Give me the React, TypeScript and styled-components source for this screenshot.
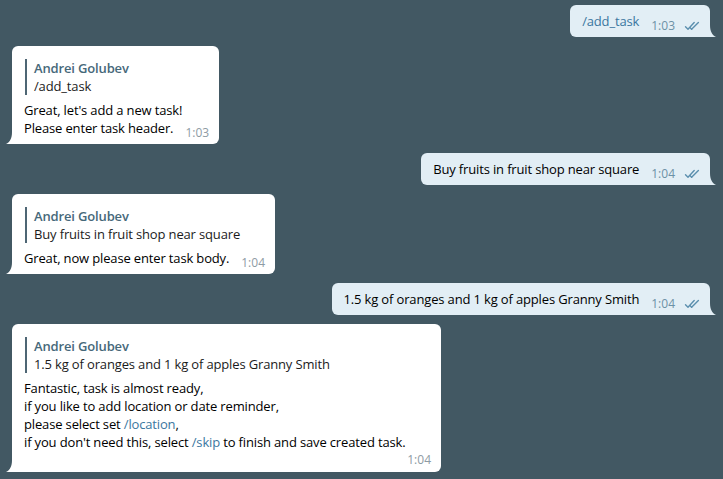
import styled, { createGlobalStyle } from 'styled-components';

const GlobalStyle = createGlobalStyle`
    html, body {
        margin: 0;
        padding: 0;
        background: #425863;
    }
    body {
        font-family: 'Open Sans', 'Noto Sans', sans-serif;
        font-size: 13px;
        line-height: 18px;
        letter-spacing: -0.15px;
        color: #000;
        -webkit-font-smoothing: antialiased;
    }
`;

const Chat = styled.div`
    display: flex;
    flex-direction: column;
    gap: 9px;
    padding: 5px 13px 7px 12px;
    width: 723px;
    height: 479px;
    box-sizing: border-box;
    overflow: hidden;
`;

const Row = styled.div<{ $out?: boolean }>`
    display: flex;
    justify-content: ${(p) => (p.$out ? 'flex-end' : 'flex-start')};
`;

const Bubble = styled.div<{ $out?: boolean; $width?: number }>`
    position: relative;
    display: flex;
    flex-direction: column;
    box-sizing: border-box;
    width: ${(p) => (p.$width ? `${p.$width}px` : 'auto')};
    padding: 7px 10px 7px 12px;
    background: ${(p) => (p.$out ? '#e2eef5' : '#ffffff')};
    border-radius: ${(p) => (p.$out ? '6px 6px 0 6px' : '6px 6px 6px 0')};
`;

const TailSvg = styled.svg<{ $out?: boolean }>`
    position: absolute;
    bottom: 0;
    ${(p) => (p.$out ? 'right: -6px;' : 'left: -6px; transform: scaleX(-1);')}
    width: 6px;
    height: 12px;
    fill: ${(p) => (p.$out ? '#e2eef5' : '#ffffff')};
`;

const Reply = styled.div`
    display: flex;
    flex-direction: column;
    margin: 6px 0 6px 1px;
    padding-left: 7px;
    border-left: 2px solid #4e6674;
`;

const ReplyName = styled.span`
    font-weight: 600;
    color: #46687a;
    white-space: nowrap;
`;

const ReplyText = styled.span`
    color: #1b1b1b;
    white-space: nowrap;
`;

const Line = styled.div`
    white-space: nowrap;
`;

const LastLine = styled.div`
    display: flex;
    align-items: flex-end;
    white-space: nowrap;
`;

const MetaRow = styled.div`
    display: flex;
    justify-content: flex-end;
    height: 14px;
`;

const Meta = styled.span<{ $out?: boolean }>`
    display: flex;
    align-items: center;
    gap: 9px;
    margin-left: auto;
    margin-bottom: -3px;
    padding-left: 12px;
    font-size: 12px;
    line-height: 14px;
    letter-spacing: 0;
    color: ${(p) => (p.$out ? '#6c91a6' : '#8e9ba4')};
`;

const Command = styled.span`
    color: #3b77a0;
`;

function Tail({ out }: { out?: boolean }) {
    return (
        <TailSvg $out={out} viewBox="0 0 6 12" aria-hidden>
            <path d="M0 0 C0 6 2 10 6 12 L0 12 Z" />
        </TailSvg>
    );
}

function Checks() {
    return (
        <svg width="16" height="10" viewBox="0 0 16 10" fill="none" stroke="#5b8fae" strokeWidth="1.4" strokeLinecap="round" strokeLinejoin="round">
            <path d="M1.5 5.8 L4 8.3 L10.2 1.6" />
            <path d="M7.6 8.2 L14.4 1.6" />
            <path d="M6.2 6.8 L7.6 8.2" />
        </svg>
    );
}

function Outgoing({ children, time }: { children: React.ReactNode; time: string }) {
    return (
        <Row $out>
            <Bubble $out>
                <LastLine>
                    <span>{children}</span>
                    <Meta $out>
                        {time}
                        <Checks />
                    </Meta>
                </LastLine>
                <Tail out />
            </Bubble>
        </Row>
    );
}

interface IncomingProps {
    quote: string;
    lines: React.ReactNode[];
    time: string;
    timeBelow?: boolean;
    width?: number;
}

function Incoming(props: IncomingProps) {
    const head = props.lines.slice(0, -1);
    const last = props.lines[props.lines.length - 1];
    return (
        <Row>
            <Bubble $width={props.width}>
                <Reply>
                    <ReplyName>Andrei Golubev</ReplyName>
                    <ReplyText>{props.quote}</ReplyText>
                </Reply>
                {head.map((l, i) => (
                    <Line key={i}>{l}</Line>
                ))}
                {props.timeBelow ? (
                    <>
                        <Line>{last}</Line>
                        <MetaRow>
                            <Meta>{props.time}</Meta>
                        </MetaRow>
                    </>
                ) : (
                    <LastLine>
                        <span>{last}</span>
                        <Meta>{props.time}</Meta>
                    </LastLine>
                )}
                <Tail />
            </Bubble>
        </Row>
    );
}

export default function App() {
    return (
        <>
            <GlobalStyle />
            <Chat>
                <Outgoing time="1:03">
                    <Command>/add_task</Command>
                </Outgoing>
                <Incoming
                    quote="/add_task"
                    lines={["Great, let's add a new task!", 'Please enter task header.']}
                    time="1:03"
                />
                <Outgoing time="1:04">Buy fruits in fruit shop near square</Outgoing>
                <Incoming
                    quote="Buy fruits in fruit shop near square"
                    lines={['Great, now please enter task body.']}
                    time="1:04"
                />
                <Outgoing time="1:04">1.5 kg of oranges and 1 kg of apples Granny Smith</Outgoing>
                <Incoming
                    quote="1.5 kg of oranges and 1 kg of apples Granny Smith"
                    lines={[
                        'Fantastic, task is almost ready,',
                        'if you like to add location or date reminder,',
                        <>
                            please select set <Command>/location</Command>,
                        </>,
                        <>
                            if you don't need this, select <Command>/skip</Command> to finish and save created task.
                        </>,
                    ]}
                    time="1:04"
                    timeBelow
                    width={429}
                />
            </Chat>
        </>
    );
}
